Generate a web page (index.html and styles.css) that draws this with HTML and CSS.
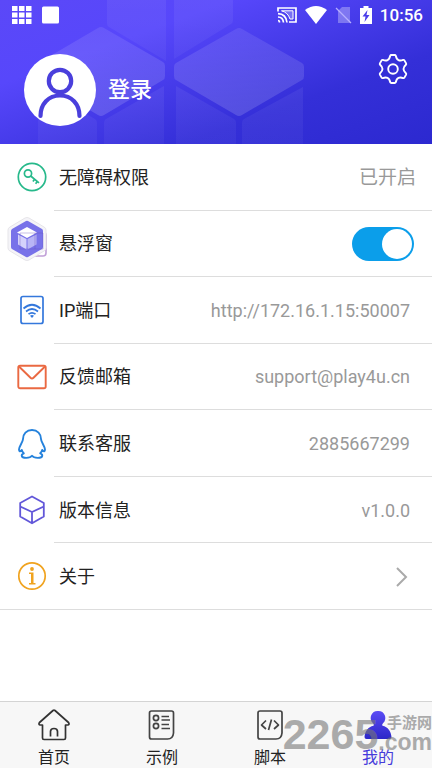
FILE: index.html
```html
<!DOCTYPE html>
<html lang="zh-CN">
<head>
<meta charset="utf-8">
<meta name="viewport" content="width=device-width, initial-scale=1">
<title>我的</title>
<link rel="stylesheet" href="styles.css">
</head>
<body>
<header class="header">
  <svg class="header-art" viewBox="0 0 432 144" preserveAspectRatio="xMinYMin slice" aria-hidden="true">
    <defs>
      <linearGradient id="face" x1="0" y1="0" x2="0" y2="1"><stop offset="0" stop-color="#fff" stop-opacity=".09"/><stop offset="1" stop-color="#fff" stop-opacity=".15"/></linearGradient>
      <linearGradient id="side" x1="0" y1="0" x2="0" y2="1"><stop offset="0" stop-color="#fff" stop-opacity=".06"/><stop offset="1" stop-color="#fff" stop-opacity=".04"/></linearGradient>
    </defs>
    <g fill="url(#face)">
      <path d="M98 28q3-2 6 0l59 34q2 1 2 4v10q0 3-2 4l-59 35q-3 2-6 0L40 81q-2-1-2-4V66q0-3 2-4z"/>
      <path d="M236 29q3-2 6 0l60 34q2 1 2 4v9q0 3-2 4l-60 35q-3 2-6 0l-60-35q-2-1-2-4v-9q0-3 2-4z"/>
    </g>
    <g fill="url(#side)">
      <path d="M107 0h59v61l-57-34q-2-1-2-4zM174 0h59v20q0 3-2 4l-57 35z"/>
      <path d="M38 86l57 33q2 1 2 4v21H38zM164 86v58h-60v-21q0-3 2-4zM176 86l58 33q2 1 2 4v21h-60zM303 87v57h-61v-21q0-3 2-4z"/>
    </g>
  </svg>
  <div class="status">
    <svg width="20" height="18" viewBox="0 0 20 18" fill="#fff"><path d="M0 0h5.500v5H0zM7 0h5.500v5H7zM14 0h5.500v5H14zM0 6.500h5.500v5H0zM7 6.500h5.500v5H7zM14 6.500h5.500v5H14zM0 13h5.500v5H0zM7 13h5.500v5H7zM14 13h5.500v5H14z"/></svg>
    <svg width="17" height="18" viewBox="0 0 17 18"><rect y=".5" width="17" height="17" rx="1.500" fill="#fff"/></svg>
    <div class="status-right">
      <svg width="20" height="16" viewBox="0 0 20 16" fill="none" stroke="#fff" stroke-width="1.700"><path d="M1 4.500V1h18v14h-7M1 13.500q1.500 0 1.500 2M1 10q5 0 5.500 5.500M1 6.700q8 .3 9 8.800"/><path d="M4.500 3.800H16v8.200h-3Q11 5.500 4.500 3.800z" fill="#fff" fill-opacity=".25" stroke-width="1"/></svg>
      <svg width="22" height="18" viewBox="0 0 22 18"><path d="M0 4q11-8 22 0L11 18z" fill="#fff"/></svg>
      <svg width="17" height="18" viewBox="0 0 17 18"><path d="M7 1h8v16H3V5z" fill="#fff" opacity=".3"/><path d="M1 2l15 15" stroke="#b6aeff" stroke-width="1.300"/></svg>
      <svg width="12" height="18" viewBox="0 0 12 18"><path d="M3.500 0h5v2H12v16H0V2h3.500z" fill="#fff"/><path d="M7.500 4L2.500 10.500h3L4.500 16l5-7h-3z" fill="#4b3eea"/></svg>
      <time>10:56</time>
    </div>
  </div>
  <div class="profile">
    <a class="login" href="#login">
      <svg class="avatar" viewBox="0 0 72 72" aria-hidden="true"><circle cx="36" cy="36" r="36" fill="#fff"/><g fill="none" stroke="#4a3fdc" stroke-width="4.200" stroke-linecap="round"><circle cx="36" cy="27" r="11.200"/><path d="M16.500 62c0-12 8-20.500 19.500-20.500S55.500 50 55.500 62"/></g></svg>
      <span>登录</span>
    </a>
    <button class="settings" type="button" aria-label="设置">
      <svg viewBox="0 0 30 30" fill="none" stroke="#fff" stroke-width="1.900" stroke-linejoin="round"><path d="M12.200 1.800Q12.500 1 13.300 1h3.400q.8 0 1.100.8c.5 2.600 1.200 3.700 2.700 4.300 1.400.8 2.600.7 4.700-.2q.8-.2 1.200.5l1.700 3q.4.8-.2 1.400c-1.800 1.600-2.400 2.700-2.400 4.200s.6 2.600 2.400 4.200q.6.600.2 1.400l-1.700 3q-.4.700-1.200.5c-2.100-.9-3.300-1-4.700-.2-1.500.6-2.200 1.700-2.700 4.300q-.3.800-1.100.8h-3.400q-.8 0-1.100-.8c-.5-2.600-1.200-3.700-2.700-4.300-1.400-.8-2.600-.7-4.700.2q-.8.200-1.200-.5l-1.700-3q-.4-.8.200-1.400C3.900 17.600 4.500 16.500 4.500 15s-.6-2.600-2.400-4.200q-.6-.6-.2-1.400l1.700-3q.4-.7 1.200-.5c2.100.9 3.300 1 4.700.2 1.500-.6 2.200-1.700 2.700-4.300z"/><circle cx="15" cy="15" r="4.800"/></svg>
    </button>
  </div>
</header>

<main class="content">
  <ul class="list">
    <li class="row">
      <span class="icon"><svg viewBox="0 0 30 30" fill="none" stroke="#27b98b" stroke-width="1.700"><circle cx="15" cy="15" r="13.700"/><circle cx="11" cy="11.500" r="3.600"/><path d="M13.700 14l8.300 6.800M17.500 17.500l-1.600 2M20.300 19.500l-1.700 2.200"/></svg></span>
      <div class="line"><span>无障碍权限</span><span class="value state">已开启</span></div>
    </li>
    <li class="row">
      <span class="icon"><svg viewBox="0 0 30 30" fill="none" stroke="#c1a0d8" stroke-width="1.600"><rect x="3" y="3" width="26" height="24" rx="3"/></svg>
        <svg class="floating" viewBox="0 0 42 46"><path d="M19 1q2-1 4 0l15 9q2 1 2 3v18q0 2-2 3l-15 9q-2 1-4 0L4 34q-2-1-2-3V13q0-2 2-3z" fill="#f5f4f8" stroke="#e6e5e9"/><path d="M20 4q1-.6 2 0l14 8q1 .6 1 2v16q0 1-1 2l-14 8q-1 .6-2 0L6 32q-1-.6-1-2V14q0-1 1-2z" fill="#7872e9"/><path d="M11 15.500L21 10l10 5.500L21 21z" fill="#fff"/><path d="M12 17.500l8.500 4.500v10.500L12 27.500z" fill="#d5d2fb"/><path d="M30.500 17.500L21.500 22v10.500l9-5z" fill="#b9b5f5"/><path d="M14 16h23v16H14zM29 16v16" fill="none" stroke="#604dbb" stroke-opacity=".35"/></svg></span>
      <div class="line"><label for="float-window">悬浮窗</label><input class="switch" id="float-window" type="checkbox" role="switch" checked></div>
    </li>
    <li class="row">
      <span class="icon"><svg viewBox="0 0 30 30" fill="none" stroke="#3478dc" stroke-width="1.700"><rect x="4" y="1.500" width="22" height="27" rx="2"/><path d="M6.500 13.500q8.500-7.500 17 0M9 16.500q6-5 12 0M11.500 19.200q3.500-2.800 7 0"/><path d="M13 20.800q2-1.400 4 0l-2 2.300z" fill="#3478dc" stroke="none"/></svg></span>
      <div class="line"><span>IP端口</span><span class="value">http://172.16.1.15:50007</span></div>
    </li>
    <li class="row">
      <span class="icon"><svg viewBox="0 0 30 30" fill="none" stroke="#ea6942" stroke-width="1.900" stroke-linejoin="round"><rect x="1.300" y="3.700" width="27.400" height="22.600" rx="1.800"/><path d="M2 4.500l11.500 11.300q1.500 1.400 3 0L28 4.500"/></svg></span>
      <div class="line"><span>反馈邮箱</span><span class="value">support@play4u.cn</span></div>
    </li>
    <li class="row">
      <span class="icon"><svg viewBox="0 0 30 30" fill="none" stroke="#2582dc" stroke-width="1.900" stroke-linejoin="round"><path d="M15 1C9.500 1 6 5 6 10c0 3-3.800 7-4 10.500 0 2 1 2.500 2.800.5.300 1.500 1 2.500 2 3.300-1.500.5-2.300 1.500-2 2.700.5 2.500 8.200 2.500 10.200-.2 2 2.700 9.700 2.700 10.200.2.300-1.200-.5-2.200-2-2.700 1-.8 1.700-1.800 2-3.300 1.800 2 2.800 1.500 2.800-.5-.2-3.500-4-7.500-4-10.500 0-5-3.500-9-9-9z"/></svg></span>
      <div class="line"><span>联系客服</span><span class="value">2885667299</span></div>
    </li>
    <li class="row">
      <span class="icon"><svg viewBox="0 0 30 30" fill="none" stroke="#6257d9" stroke-width="1.800" stroke-linejoin="round"><path d="M15 1.500L26.800 8v13.500L15 28.300 3.200 21.500V8zM3.200 11.500L15 17l11.800-5.500M15 17v11"/></svg></span>
      <div class="line"><span>版本信息</span><span class="value">v1.0.0</span></div>
    </li>
    <li class="row">
      <span class="icon"><svg viewBox="0 0 30 30"><circle cx="15" cy="15" r="13.200" fill="none" stroke="#f0a31f" stroke-width="1.700"/><circle cx="15" cy="8" r="1.900" fill="#f0a31f"/><path d="M12 11.500h4.500V22H18.500v1.500H12V22h2v-9h-2z" fill="#f0a31f"/></svg></span>
      <div class="line"><span>关于</span><svg class="chevron" viewBox="0 0 12 20" fill="none" stroke="#aaa" stroke-width="2"><path d="M1 1l9 9-9 9"/></svg></div>
    </li>
  </ul>
</main>

<nav class="tabs">
  <a class="tab" href="#home"><svg viewBox="0 0 32 32" fill="none" stroke="#333" stroke-width="1.700" stroke-linejoin="round"><path d="M15 1.500q1-.8 2 0l13.500 12q1.300 2-.5 2.500h-2.500v13q0 1.500-1.500 1.500H6q-1.500 0-1.500-1.500V16H2q-1.800-.5-.5-2.500zM12.500 27.500v-5q0-3 3.500-3t3.500 3v5"/></svg><span>首页</span></a>
  <a class="tab" href="#examples"><svg viewBox="0 0 32 32" fill="none" stroke="#444" stroke-width="1.700" stroke-linejoin="round"><path d="M5.500 2h20q2 0 2 2v20q-.5 6-6 6h-16q-2 0-2-2V4q0-2 2-2z"/><circle cx="10" cy="9" r="2.600"/><circle cx="10" cy="17" r="2.600"/><path d="M15.500 7.500H23M15.500 11H24M15.500 15.500H23M15.500 19.500H24"/></svg><span>示例</span></a>
  <a class="tab" href="#scripts"><svg viewBox="0 0 32 32" fill="none" stroke="#444" stroke-width="1.700" stroke-linejoin="round"><path d="M6 2h20q2 0 2 2v20q-.5 6-6 6H6q-2 0-2-2V4q0-2 2-2zM12 11.500L7.500 16l4.500 4M20 11.500l4.500 4.500-4.500 4M17.500 10.500l-3 10.500"/></svg><span>脚本</span></a>
  <a class="tab active" href="#mine" aria-current="page"><svg viewBox="0 0 32 32"><defs><linearGradient id="user" x1="0" y1="0" x2="0" y2="1"><stop stop-color="#5b4cf5"/><stop offset="1" stop-color="#2c27c8"/></linearGradient></defs><path d="M16 2a7 7 0 0 0-5 12.200q1.500 1.500.5 2.500C6 18 3 22 2.500 28q0 2 2 2h23q2 0 2-2C29 22 26 18 20.500 16.700q-1-1 .5-2.500A7 7 0 0 0 16 2z" fill="url(#user)"/></svg><span>我的</span></a>
  <div class="watermark">
    <span class="mark-number">2265</span>
    <span class="mark-side"><span class="mark-name">手游网</span><span class="mark-domain">.com</span></span>
  </div>
</nav>
</body>
</html>
```
FILE: styles.css
```css
* { box-sizing: border-box; }

body {
  margin: 0;
  min-height: 100vh;
  display: flex;
  flex-direction: column;
  background: #fff;
  color: #222;
  font: 18px/24px Roboto, "Noto Sans CJK SC", sans-serif;
}

a { color: inherit; text-decoration: none; }
svg { display: block; flex: none; }

.header {
  position: relative;
  overflow: hidden;
  padding-bottom: 18px;
  background: linear-gradient(160deg, #5b48f8 0%, #5747fb 28%, #342fd8 70%, #2c29d0 100%);
  color: #fff;
}

.header-art {
  position: absolute;
  inset: 0;
  width: 100%;
  height: 100%;
}

.status {
  position: relative;
  display: flex;
  align-items: center;
  gap: 10px;
  height: 30px;
  padding: 0 9px 0 12px;
}

.status-right {
  display: flex;
  align-items: center;
  gap: 8px;
  margin-left: auto;
  font-size: 17px;
  font-weight: 500;
}

.profile {
  position: relative;
  display: flex;
  justify-content: space-between;
  align-items: flex-start;
  padding: 24px 24px 0;
}

.login {
  display: flex;
  align-items: center;
  gap: 12px;
  font-size: 22px;
  font-weight: 500;
}

.avatar { width: 72px; height: 72px; }

.settings {
  padding: 0;
  border: 0;
  background: none;
}

.settings svg { width: 30px; height: 30px; }

.content { flex: 1; }

.list {
  display: grid;
  grid-auto-rows: 1fr;
  min-height: 466px;
  margin: 0;
  padding: 0;
  list-style: none;
}

.row { display: flex; padding-left: 17px; }
.row:last-child { border-bottom: 1px solid #ddd; }
.row:last-child .line { border-bottom: 0; }

.icon {
  position: relative;
  display: flex;
  align-items: center;
  width: 37px;
}

.icon > svg { width: 30px; height: 30px; }

.icon > .floating {
  position: absolute;
  left: -11px;
  top: 6px;
  width: 42px;
  height: 46px;
}

.line {
  flex: 1;
  display: flex;
  align-items: center;
  justify-content: space-between;
  padding: 2px 22px 0 5px;
  border-bottom: 1px solid #ddd;
}

.value { color: #999; }

.state { margin-right: -6px; font-size: 19px; }

.switch {
  appearance: none;
  display: flex;
  justify-content: flex-end;
  width: 62px;
  height: 34px;
  margin: 0 -4px 0 0;
  padding: 2px;
  border-radius: 17px;
  background: #0b9eea;
}

.switch::before {
  content: "";
  width: 30px;
  height: 30px;
  border-radius: 50%;
  background: #fff;
}

.switch:not(:checked) { justify-content: flex-start; background: #ccc; }

.chevron { width: 12px; height: 20px; margin-right: 2px; }

.tabs {
  position: relative;
  display: grid;
  grid-template-columns: repeat(4, 1fr);
  border-top: 1px solid #d4d4d4;
  background: #f7f7f7;
}

.tab {
  display: flex;
  flex-direction: column;
  align-items: center;
  gap: 7px;
  padding: 7px 0 0;
  font-size: 16px;
  line-height: 20px;
}

.tab svg { width: 32px; height: 32px; }
.active { color: #463cdb; }

.watermark {
  position: absolute;
  right: 0;
  bottom: 14px;
  display: flex;
  align-items: flex-end;
  color: #777;
  opacity: .6;
  font-family: "Liberation Sans", "Noto Sans CJK SC", sans-serif;
  font-weight: 700;
  pointer-events: none;
}

.mark-number { font-size: 43px; line-height: 40px; }
.mark-side { display: flex; flex-direction: column; align-items: flex-end; }
.mark-name { font-size: 15px; line-height: 16px; }
.mark-domain { font-size: 23px; line-height: 23px; }
```
